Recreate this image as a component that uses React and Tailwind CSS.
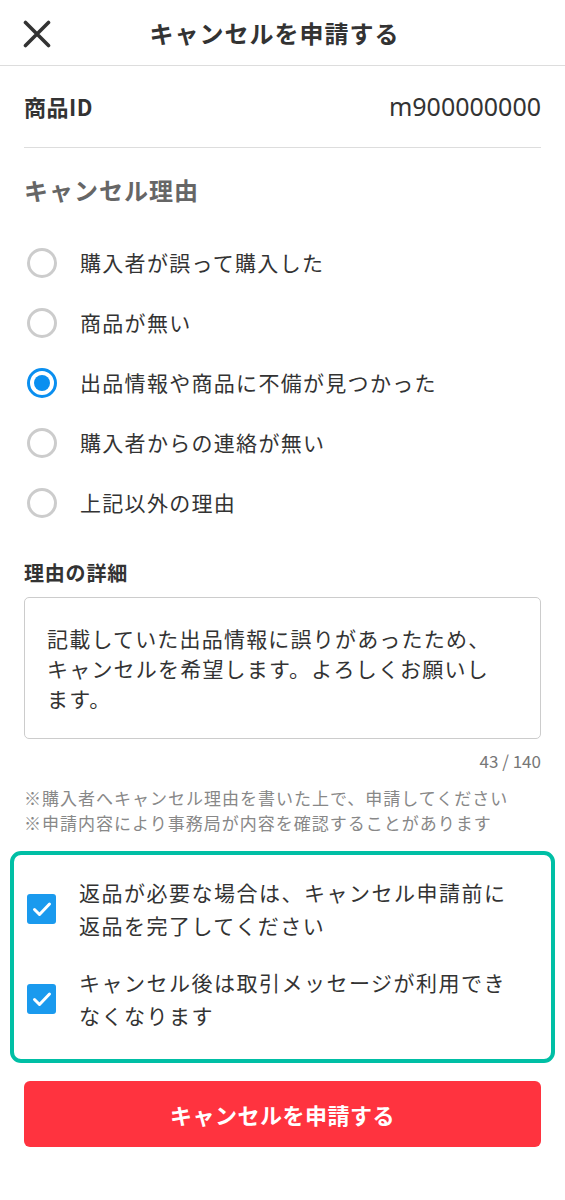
import React, { useState } from 'react';

const font = { fontFamily: '"Noto Sans CJK JP", "Noto Sans", sans-serif' };

const reasons = [
  '購入者が誤って購入した',
  '商品が無い',
  '出品情報や商品に不備が見つかった',
  '購入者からの連絡が無い',
  '上記以外の理由',
];

const Radio = ({ checked }) =>
  checked ? (
    <span className="w-[30px] h-[30px] rounded-full border-[3px] border-[#0a8ff0] flex items-center justify-center shrink-0">
      <span className="w-[16px] h-[16px] rounded-full bg-[#0a8ff0]" />
    </span>
  ) : (
    <span className="w-[30px] h-[30px] rounded-full border-[3px] border-[#cccccc] shrink-0" />
  );

const Check = () => (
  <span className="w-[29px] h-[30px] rounded-[3px] bg-[#1a9aee] flex items-center justify-center shrink-0">
    <svg width="20" height="16" viewBox="0 0 20 16" fill="none">
      <path d="M2.5 8.5 L7.5 13.5 L17.5 3" stroke="white" strokeWidth="3" strokeLinecap="round" strokeLinejoin="round" />
    </svg>
  </span>
);

export default function App() {
  const [selected, setSelected] = useState(2);

  return (
    <div className="w-[565px] min-h-[1200px] bg-white text-[#333333]" style={font}>
      {/* Header */}
      <div className="h-[66px] flex items-center relative border-b border-[#dddddd]">
        <button className="absolute left-[22px] top-[19px] w-[29px] h-[29px] flex items-center justify-center">
          <svg width="28" height="28" viewBox="0 0 28 28">
            <path d="M2.5 2.5 L25.5 25.5 M25.5 2.5 L2.5 25.5" stroke="#333" strokeWidth="3.6" strokeLinecap="round" />
          </svg>
        </button>
        <h1 className="flex-1 text-center text-[24px] font-bold tracking-[1px] pr-[16px]">キャンセルを申請する</h1>
      </div>

      <div className="px-[24px]">
        {/* Item ID */}
        <div className="h-[82px] flex items-center justify-between border-b border-[#dddddd]">
          <span className="text-[22px] font-bold tracking-[0.5px]">商品ID</span>
          <span className="text-[25px]" style={{ fontFamily: '"Noto Sans", sans-serif' }}>m900000000</span>
        </div>

        {/* Reasons */}
        <h2 className="text-[24px] font-bold text-[#666666] mt-[26px] leading-[32px] tracking-[1px]">キャンセル理由</h2>
        <div className="mt-[27px] flex flex-col">
          {reasons.map((r, i) => (
            <label key={r} className="h-[60px] flex items-center gap-[23px] pl-[3px] cursor-pointer" onClick={() => setSelected(i)}>
              <Radio checked={selected === i} />
              <span className="text-[21px] text-[#333333] tracking-[1.3px]">{r}</span>
            </label>
          ))}
        </div>

        {/* Detail */}
        <h3 className="text-[20px] font-bold mt-[26px] leading-[28px] tracking-[0.8px]">理由の詳細</h3>
        <div className="mt-[10px] h-[142px] border border-[#cccccc] rounded-[5px] pl-[22px] pt-[25px] text-[21px] leading-[30px] tracking-[1.2px]">
          記載していた出品情報に誤りがあったため、<br />
          キャンセルを希望します。よろしくお願いし<br />
          ます。
        </div>
        <div className="text-right text-[17px] text-[#777777] mt-[10px] leading-[24px]">43 / 140</div>
        <div className="mt-[12px] text-[17px] leading-[25px] text-[#888888] tracking-[1px]">
          <p>※購入者へキャンセル理由を書いた上で、申請してください</p>
          <p>※申請内容により事務局が内容を確認することがあります</p>
        </div>
      </div>

      {/* Confirm box */}
      <div className="mx-[10px] mt-[16px] border-[4px] border-[#00bfa5] rounded-[11px] pl-[13px] pt-[21px] pb-[27px] flex flex-col gap-[24px]">
        <div className="flex items-center gap-[23px]">
          <Check />
          <p className="text-[21px] leading-[33px] tracking-[1.5px]">返品が必要な場合は、キャンセル申請前に<br />返品を完了してください</p>
        </div>
        <div className="flex items-center gap-[23px]">
          <Check />
          <p className="text-[21px] leading-[33px] tracking-[1.5px]">キャンセル後は取引メッセージが利用でき<br />なくなります</p>
        </div>
      </div>

      {/* Submit */}
      <div className="px-[24px] mt-[18px]">
        <button className="w-full h-[66px] rounded-[6px] bg-[#ff333f] text-white text-[22px] font-bold tracking-[0.5px]">
          キャンセルを申請する
        </button>
      </div>
    </div>
  );
}
